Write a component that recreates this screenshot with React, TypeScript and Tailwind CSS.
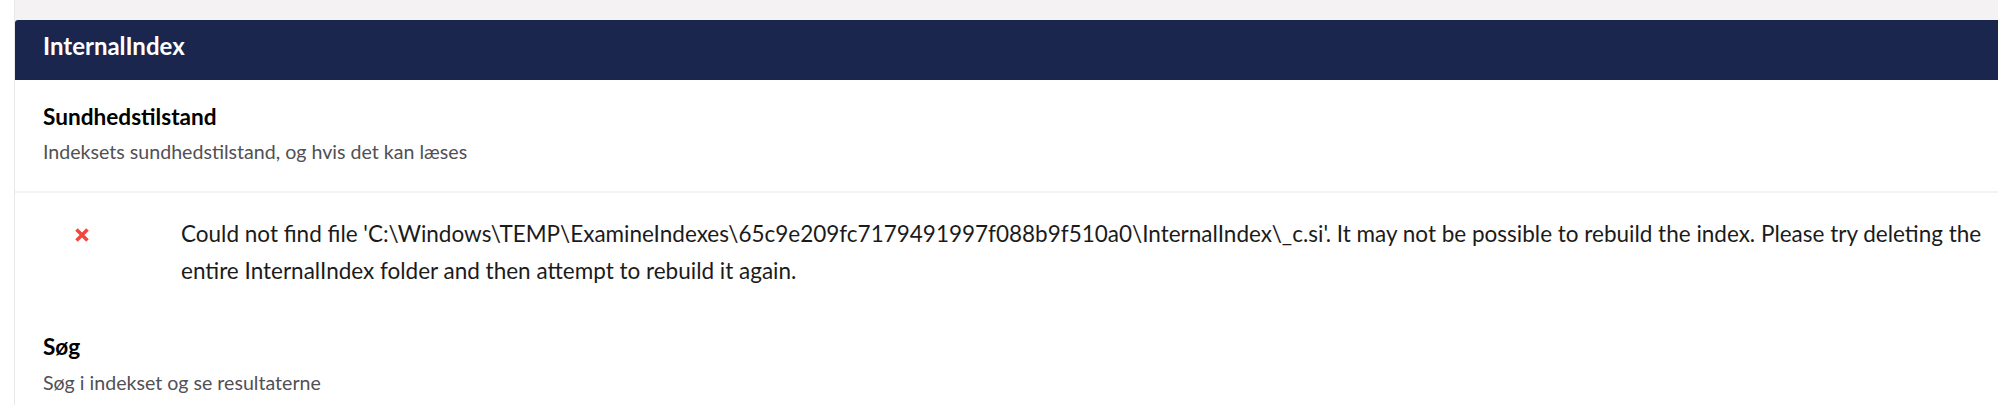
import React from 'react'

const font = { fontFamily: 'Lato, "Open Sans", sans-serif' }

const ErrorIcon = () => (
    <svg width="14" height="14" viewBox="0 0 14 14" className="block">
        <path d="M1.5 1.5 L12.5 12.5 M12.5 1.5 L1.5 12.5" stroke="#f2473c" strokeWidth="3.5" strokeLinecap="butt" />
    </svg>
)

const App = () => {
    return (
        <div className='flex w-[1998px] h-[405px] overflow-hidden bg-white' style={font}>
            <div className='w-[15px] shrink-0 bg-white border-r border-[#e9e9eb]' />
            <div className='flex-1 min-w-0 bg-[#f4f2f3] pt-[20px]'>
                <div className='bg-white rounded-tl-[3px] h-full'>
                    <div className='bg-[#1b264f] h-[60px] rounded-tl-[3px] px-[28px] pt-[14px]'>
                        <h2 className='text-white text-[24px] leading-[24px] font-bold'>InternalIndex</h2>
                    </div>

                    <div className='px-[28px] pt-[25px] pb-[27px]'>
                        <h3 className='text-[22.6px] leading-[24px] font-bold text-black'>Sundhedstilstand</h3>
                        <p className='mt-[11px] text-[19.6px] leading-[24px] text-[#515054]'>Indeksets sundhedstilstand, og hvis det kan læses</p>
                    </div>

                    <div className='border-t-2 border-[#f3f3f5]' />

                    <div className='flex pt-[22px]'>
                        <div className='w-[166px] shrink-0 pl-[60px] pt-[13px]'>
                            <ErrorIcon />
                        </div>
                        <p className='w-[1850px] shrink-0 text-[22.5px] leading-[37px] text-[#1b1b1b]'>
                            Could not find file 'C:\Windows\TEMP\ExamineIndexes\65c9e209fc7179491997f088b9f510a0\InternalIndex\_c.si'. It may not be possible to rebuild the index. Please try deleting the entire InternalIndex folder and then attempt to rebuild it again.
                        </p>
                    </div>

                    <div className='px-[28px] pt-[46px]'>
                        <h3 className='text-[22.6px] leading-[24px] font-bold text-black'>Søg</h3>
                        <p className='mt-[12px] text-[19.6px] leading-[24px] text-[#515054]'>Søg i indekset og se resultaterne</p>
                    </div>
                </div>
            </div>
        </div>
    )
}

export default App
